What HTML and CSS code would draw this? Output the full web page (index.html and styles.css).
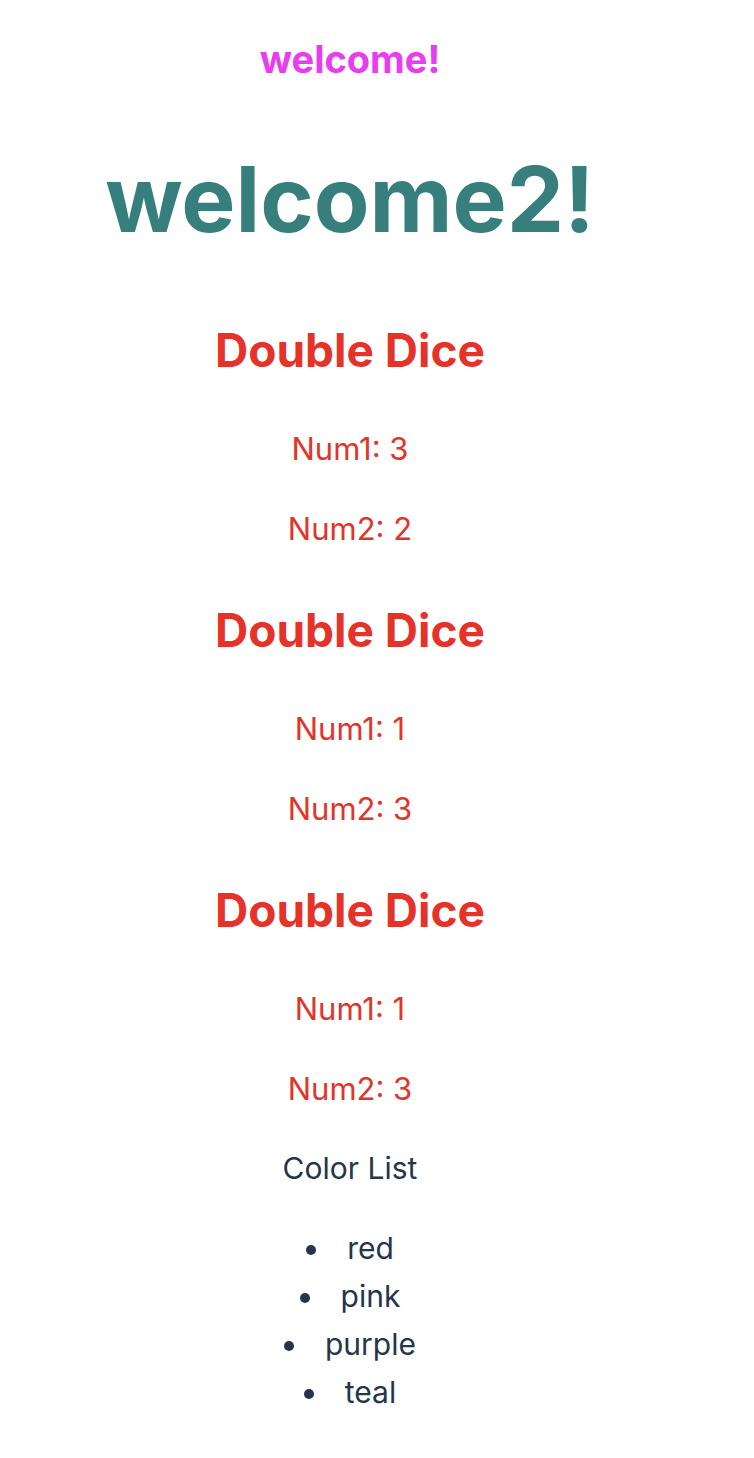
FILE: index.html
```html
<!DOCTYPE html>
<html>
<head>
<meta charset="utf-8">
<link rel="stylesheet" href="styles.css">
</head>
<body>
<div class="app">
  <h2 class="welcome">welcome!</h2>
  <h1 class="welcome2">welcome2!</h1>
  <section class="dice">
    <h2 class="dice-title">Double Dice</h2>
    <p class="num">Num1: 3</p>
    <p class="num">Num2: 2</p>
  </section>
  <section class="dice">
    <h2 class="dice-title">Double Dice</h2>
    <p class="num">Num1: 1</p>
    <p class="num">Num2: 3</p>
  </section>
  <section class="dice">
    <h2 class="dice-title">Double Dice</h2>
    <p class="num">Num1: 1</p>
    <p class="num">Num2: 3</p>
  </section>
  <p class="list-title">Color List</p>
  <ul class="colors">
    <li>red</li>
    <li>pink</li>
    <li>purple</li>
    <li>teal</li>
  </ul>
</div>
</body>
</html>
```
FILE: styles.css
```css
html, body {
  margin: 0;
  padding: 0;
  background: #fff;
}
.app {
  width: 700px;
  text-align: center;
  font-family: Inter, "Noto Sans", sans-serif;
  color: #25354a;
  padding-top: 35px;
}
.welcome {
  margin: 0;
  font-size: 38px;
  line-height: 48px;
  font-weight: 700;
  color: #e83cf0;
}
.welcome2 {
  margin: 60px 0 67px;
  font-size: 91px;
  line-height: 112px;
  font-weight: 700;
  color: #377f7c;
}
.dice-title {
  margin: 49px 0 47px;
  font-size: 46px;
  line-height: 56px;
  font-weight: 700;
  color: #e5332a;
}
.num {
  margin: 32px 0 0;
  font-size: 31px;
  line-height: 48px;
  color: #e5332a;
}
.list-title {
  margin: 31px 0 0;
  font-size: 30px;
  line-height: 48px;
}
.colors {
  margin: 32px 0 0;
  padding: 0;
  list-style: disc inside;
  font-size: 30px;
  line-height: 48px;
}
```
